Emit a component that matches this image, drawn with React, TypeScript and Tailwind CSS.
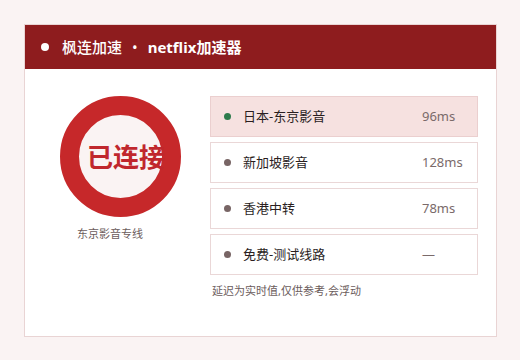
import React from "react";

const rows = [
  { name: "日本-东京影音", ms: "96ms", active: true },
  { name: "新加坡影音", ms: "128ms", active: false },
  { name: "香港中转", ms: "78ms", active: false },
  { name: "免费-测试线路", ms: "—", active: false },
];

export default function App() {
  return (
    <div
      className="w-[520px] h-[360px] bg-[#faf3f3] pt-[24px] pl-[24px]"
      style={{ fontFamily: '"Noto Sans", "Noto Sans CJK SC", sans-serif' }}
    >
      <div className="w-[473px] h-[313px] border border-[#e9d4d4] bg-white flex flex-col">
        <div className="h-[44px] bg-[#8e1c1e] flex items-center pl-[16px] text-white text-[15px] leading-none">
          <span className="w-[8px] h-[8px] rounded-full bg-white" />
          <span className="ml-[13px] font-medium">枫连加速</span>
          <span className="mx-[10px] text-[15px]">•</span>
          <span className="font-bold">netflix加速器</span>
        </div>
        <div className="flex pt-[27px] pl-[35px]">
          <div className="w-[150px] flex flex-col">
            <div className="w-[121px] h-[121px] rounded-full border-[19px] border-[#c6282a] bg-[#faf3f3] flex items-center pl-[8px]">
              <span className="whitespace-nowrap text-[26px] font-bold text-[#c0272d] leading-none">
                已连接
              </span>
            </div>
            <div className="mt-[9px] ml-[17px] text-[11px] text-[#6b5c5c] leading-[16px]">
              东京影音专线
            </div>
          </div>
          <div className="flex flex-col">
            <div className="flex flex-col gap-[5px]">
              {rows.map((r) => (
                <div
                  key={r.name}
                  className={
                    r.active
                      ? "w-[268px] h-[41px] border border-[#ebcfcf] bg-[#f6e1e0] flex items-center pl-[13px]"
                      : "w-[268px] h-[41px] border border-[#ead7d7] bg-white flex items-center pl-[13px]"
                  }
                >
                  <span
                    className={
                      r.active
                        ? "w-[7px] h-[7px] rounded-full bg-[#2e7b4c]"
                        : "w-[7px] h-[7px] rounded-full bg-[#786565]"
                    }
                  />
                  <span className="ml-[12px] flex-1 text-[13px] text-[#2a1e1e]">{r.name}</span>
                  <span className="w-[55px] text-[13px] text-[#7a6a6a]">{r.ms}</span>
                </div>
              ))}
            </div>
            <div className="mt-[8px] ml-[2px] text-[11px] text-[#6b5c5c] leading-[16px]">
              延迟为实时值,仅供参考,会浮动
            </div>
          </div>
        </div>
      </div>
    </div>
  );
}
